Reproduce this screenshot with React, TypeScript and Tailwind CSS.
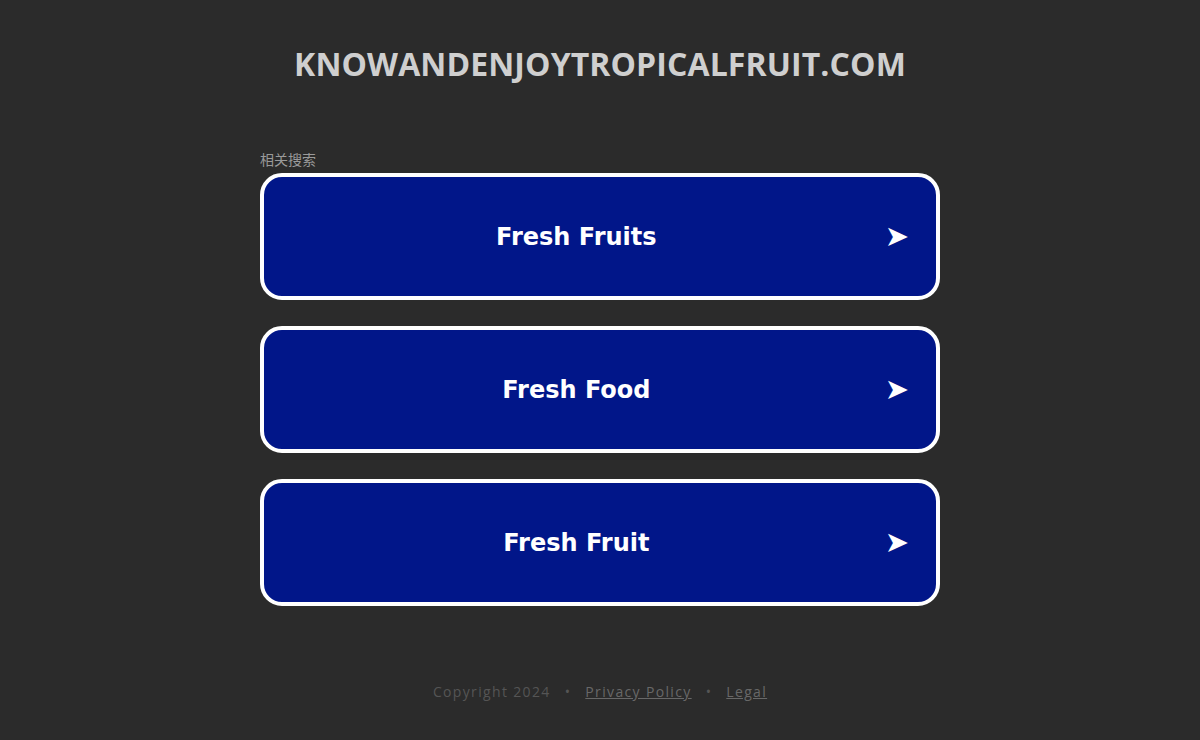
export default function App() {
  const items = ["Fresh Fruits", "Fresh Food", "Fresh Fruit"];
  return (
    <div className="min-h-[740px] w-full bg-[#2b2b2b] flex flex-col items-center">
      <h1 className="mt-[44px] text-[32px] leading-[40px] font-bold text-[#cfcfcf] font-['Open_Sans',sans-serif] tracking-[0.1px]">
        KNOWANDENJOYTROPICALFRUIT.COM
      </h1>
      <div className="mt-[67px] w-[680px]">
        <div className="text-[14px] leading-[16px] text-[#9a9a9a] font-['Noto_Sans_CJK_SC',sans-serif]">
          相关搜索
        </div>
        <div className="mt-[6px] flex flex-col gap-[26px]">
          {items.map((t) => (
            <div
              key={t}
              className="h-[127px] rounded-[22px] border-4 border-white bg-[#011689] flex items-center"
            >
              <span className="flex-1 pl-[4px] text-center text-white text-[24px] font-bold font-['DejaVu_Sans',sans-serif]">
                {t}
              </span>
              <span className="text-white text-[29px] leading-none mr-[27px] font-['DejaVu_Sans',sans-serif]">➤</span>
            </div>
          ))}
        </div>
      </div>
      <div className="mt-[75px] flex items-center text-[14px] text-[#555555] tracking-[1.35px] font-['Open_Sans',sans-serif]">
        <span>Copyright 2024</span>
        <span className="mx-[14px]">•</span>
        <span className="underline text-[#686868]">Privacy Policy</span>
        <span className="mx-[14px]">•</span>
        <span className="underline text-[#686868]">Legal</span>
      </div>
    </div>
  );
}
